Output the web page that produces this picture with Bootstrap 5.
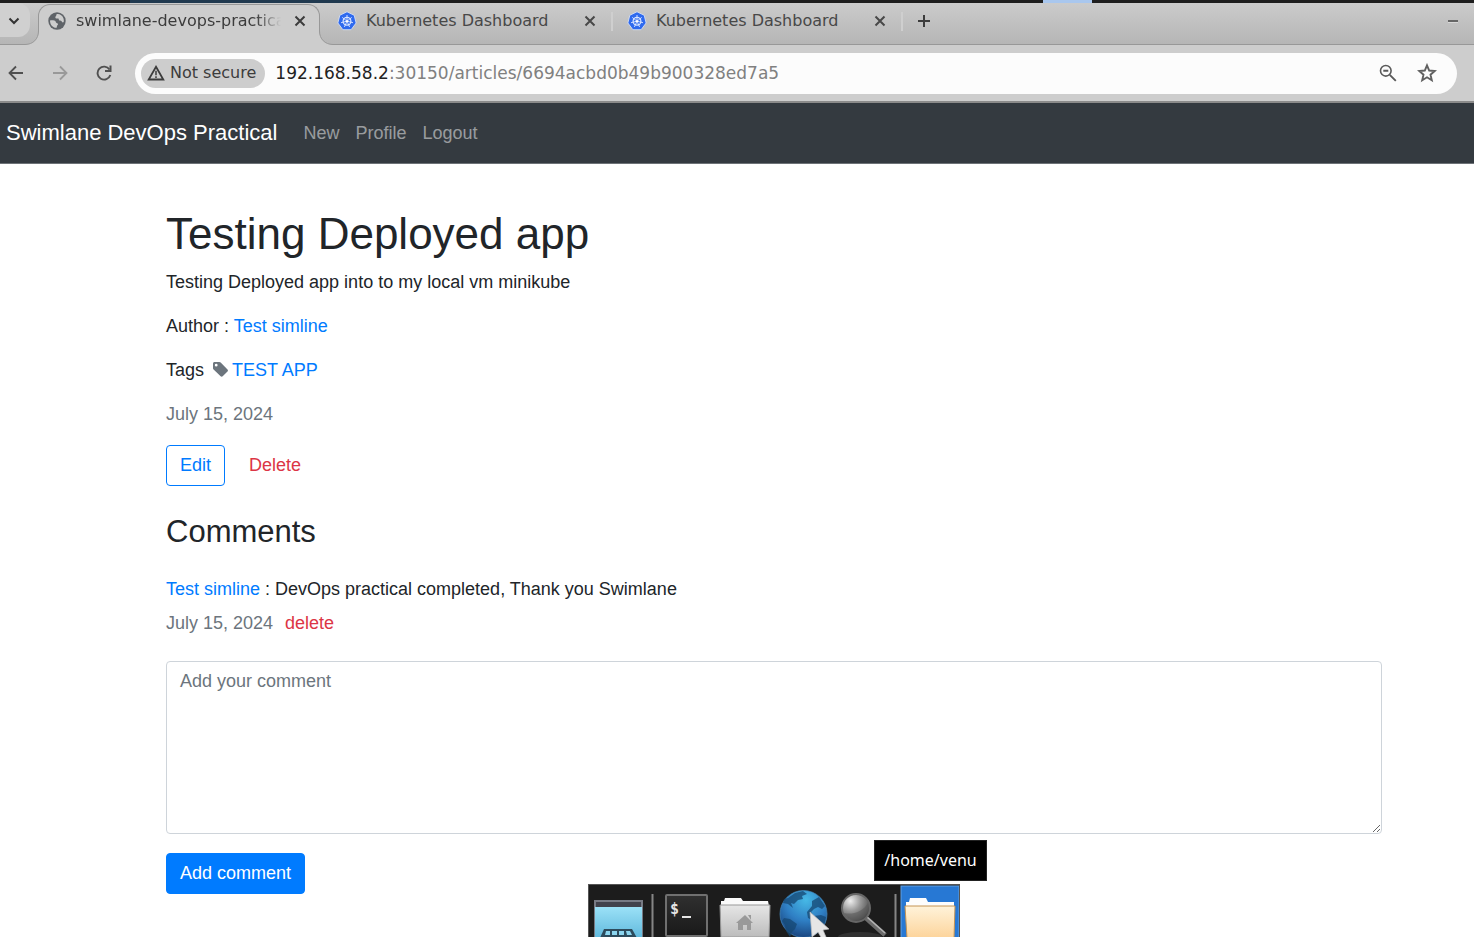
<!DOCTYPE html>
<html lang="en">
<head>
<meta charset="utf-8">
<meta name="viewport" content="width=device-width, initial-scale=1">
<title>swimlane-devops-practical</title>
<link href="https://cdn.jsdelivr.net/npm/bootstrap@5.3.0/dist/css/bootstrap.min.css" rel="stylesheet">
<style>
:root{--chrome:#cdcdcd;--edge:#989898;--ink:#3c3c3c}
body{font-family:"Liberation Sans",Arial,sans-serif;font-size:18px;line-height:26px;color:#212529;background:#fff;min-height:100vh;overflow:hidden}
svg{display:block;flex:none}
a{text-decoration:none;color:#007bff}
p{margin-bottom:18px}
/* browser frame */
.browser{font-family:"DejaVu Sans",sans-serif;font-size:16px;line-height:24px;color:var(--ink)}
.desk-edge{height:3px;background:linear-gradient(90deg,#1e1e1e 130px,#20394f 130px 370px,#1e1e1e 370px 1043px,#a9c7ee 1043px 1092px,#1e1e1e 1092px)}
.tab-strip{height:42px;background:linear-gradient(#cbcbcb,#b5b5b5);box-shadow:inset 0 -1px var(--edge)}
.bare{border:0;padding:0;background:none;color:inherit;display:flex;align-items:center;justify-content:center;flex:none}
.tab-search{width:30px;height:34px;background:#d0d0d0;border-radius:0 12px 12px 0;margin-right:8px}
.tab-item{width:290px;height:36px;padding-left:14px;gap:9px;position:relative;color:#484848}
.tab-item .bare{position:absolute;left:258px;width:18px;height:18px}
.tab-item.rule::after{content:"";position:absolute;right:0;width:2px;height:19px;background:#cfcfcf}
.tab-on{width:282px;height:41px;margin:1px 3px 0 0;padding:0 0 8px 9px;gap:10px;background:var(--chrome);border:1px solid var(--edge);border-bottom:0;border-radius:12px 12px 0 0;color:var(--ink)}
.tab-on .tab-label{width:205px;overflow:hidden;white-space:nowrap;-webkit-mask-image:linear-gradient(90deg,#000 180px,transparent 205px);mask-image:linear-gradient(90deg,#000 180px,transparent 205px)}
.tab-on .bare{left:252px}
.foot{position:absolute;bottom:0}
.foot-l{left:-14px}
.foot-r{right:-14px}
.new-tab{width:42px;height:36px}
.minimize{width:42px;height:36px}
.toolbar-row{height:58px;background:var(--chrome);border-bottom:2px solid #8b8b8b;padding-right:17px}
.tool{width:44px;height:32px}
.tool-back{width:38px;padding-right:6px}
.omni{height:41px;border-radius:21px;background:#fcfcfc;padding:0 20px 0 6px;margin-left:9px}
.chip{height:29px;border-radius:15px;background:var(--chrome);padding:0 9px 0 6px;gap:5px;margin-right:10px}
.star-btn{margin-left:7px}
.url{font-size:17px;color:#808080}
.url b{font-weight:400;color:#222}
/* application */
.app-bar{background:#343a40;height:61px;padding:0 6px;border-bottom:1px solid #6d7277}
.app-bar .navbar-brand{font-size:22px;color:#fff;margin-right:18px;padding:0}
.app-bar .nav-link{color:rgba(255,255,255,.5);padding:0 8px}
.article{padding:43px 92px 0 166px}
h1{font-size:44px;line-height:53px;font-weight:400;margin-bottom:9px}
h2{font-size:31px;line-height:37px;font-weight:400;margin:27px 0 26px}
.app-btn{font-size:18px;line-height:26px;padding:5px 13px 7px;height:41px;border-radius:4px;display:inline-flex;align-items:center}
.btn-outline-primary{--bs-btn-color:#007bff;--bs-btn-border-color:#007bff}
.btn-primary{--bs-btn-bg:#007bff;--bs-btn-border-color:#007bff}
.app-actions{gap:10px}
.comment-meta{gap:12px}
.comment-form{padding-top:25px}
.muted{color:#6c757d}
.red{color:#dc3545}
textarea.form-control{font-size:18px;line-height:26px;padding:6px 13px;height:173px;border:1px solid #ced4da;border-radius:4px;margin-bottom:19px}
textarea.form-control::placeholder{color:#6c757d}
/* desktop panel over the page */
.dock{position:absolute;bottom:0;left:588px;width:372px;height:53px;background:#1c1c1c;border:1px solid #555;border-bottom:0;overflow:hidden}
.dock svg{margin:-1px 0 0 -1px}
.dock-tip{position:absolute;bottom:56px;left:874px;width:113px;height:41px;background:#000;border:1px solid #222;color:#fff;font:16px/39px "Noto Sans",sans-serif;text-align:center}
</style>
</head>
<body class="position-relative">
<svg width="0" height="0" class="position-absolute" aria-hidden="true">
  <defs>
    <symbol id="x" viewBox="0 0 18 18"><path d="M4.500 4.500l9 9M13.500 4.500l-9 9" stroke="currentColor" stroke-width="2" fill="none"/></symbol>
    <symbol id="k8s" viewBox="0 0 20 20">
      <path d="M10 .8l7.200 3.500 1.900 7.700-5 6.700H5.900L.9 12l1.900-7.700z" fill="#2f6aee" stroke="#dfe7f6" stroke-width=".8" stroke-linejoin="round"/>
      <circle cx="10" cy="10.300" r="3.900" fill="none" stroke="#dce7ff" stroke-width="1.200"/>
      <path d="M10 4V9M14.800 6.400l-4.100 3.200M16 11.700l-5-1.200M12.600 16l-2.100-4.700M7.400 16l2.100-4.700M4 11.700l5-1.200M5.200 6.400l4.100 3.200" stroke="#dce7ff" stroke-width=".9"/>
      <circle cx="10" cy="10.300" r="1.200" fill="#fff"/>
    </symbol>
  </defs>
</svg>

<header class="browser">
  <div class="desk-edge"></div>
  <div class="tab-strip d-flex">
    <button class="bare tab-search" aria-label="Search tabs"><svg width="14" height="14" viewBox="0 0 14 14"><path d="M1.500 5.500L6 10l4.500-4.500" fill="none" stroke="#333" stroke-width="2"/></svg></button>
    <div class="tab-item tab-on d-flex align-items-center">
      <svg class="foot foot-l" width="14" height="14" viewBox="0 0 14 14"><path d="M0 13.500C8 13.500 13.500 8 13.500 0H14v14H0z" fill="#cdcdcd"/><path d="M0 13.500C8 13.500 13.500 8 13.500 0" fill="none" stroke="#989898"/></svg>
      <svg width="18" height="18" viewBox="0 0 18 18"><circle cx="9" cy="9" r="8.700" fill="#5f6368"/><path d="M8.500 2.200c2.800-.6 6 1 7 4.200.4 1.500.4 2.600.2 3.600-.6.700-1.400.5-1.800-.3-.5-1-1.700-.7-2.400-1.100-1-.6-.4-1.700-1.300-2-1.200-.4-2.700.2-2.900-1.200-.1-1.100 1.400-1.400 1.200-3.200zM2 8.500c1.700-.3 4.800-.3 5.500.8.600 1 .3 1.600 1.500 1.900 1.200.3 1.400 1 .6 1.800-.8.700-.6 1.700-1 2.800-3.700.2-6.600-3-6.600-7.300z" fill="#cdcdcd"/></svg>
      <span class="tab-label">swimlane-devops-practical</span>
      <button class="bare" aria-label="Close tab"><svg width="18" height="18"><use href="#x"/></svg></button>
      <svg class="foot foot-r" width="14" height="14" viewBox="0 0 14 14"><path d="M14 13.500C6 13.500.5 8 .5 0H0v14h14z" fill="#cdcdcd"/><path d="M14 13.500C6 13.500.5 8 .5 0" fill="none" stroke="#989898"/></svg>
    </div>
    <div class="tab-item rule d-flex align-items-center">
      <svg width="20" height="20"><use href="#k8s"/></svg><span>Kubernetes Dashboard</span>
      <button class="bare" aria-label="Close tab"><svg width="18" height="18"><use href="#x"/></svg></button>
    </div>
    <div class="tab-item rule d-flex align-items-center">
      <svg width="20" height="20"><use href="#k8s"/></svg><span>Kubernetes Dashboard</span>
      <button class="bare" aria-label="Close tab"><svg width="18" height="18"><use href="#x"/></svg></button>
    </div>
    <button class="bare new-tab" aria-label="New tab"><svg width="14" height="14" viewBox="0 0 14 14"><path d="M7 1v12M1 7h12" stroke="#3c3c3c" stroke-width="2"/></svg></button>
    <button class="bare minimize ms-auto" aria-label="Minimize"><svg width="10" height="4" viewBox="0 0 10 4"><path d="M0 2h10" stroke="#666" stroke-width="2"/><path d="M0 3.500h10" stroke="#d8d8d8"/></svg></button>
  </div>
  <div class="toolbar-row d-flex align-items-center">
    <div class="d-flex">
      <button class="bare tool tool-back" aria-label="Back"><svg width="16" height="16" viewBox="0 0 16 16"><path d="M15 8H2M8 1.500L1.500 8 8 14.500" fill="none" stroke="#505050" stroke-width="1.800"/></svg></button>
      <button class="bare tool" aria-label="Forward"><svg width="16" height="16" viewBox="0 0 16 16"><path d="M1 8h13M8 1.500L14.500 8 8 14.500" fill="none" stroke="#999" stroke-width="1.800"/></svg></button>
      <button class="bare tool" aria-label="Reload"><svg width="16" height="16" viewBox="0 0 16 16"><path d="M13.500 4.500A6.500 6.500 0 1 0 14.300 10" fill="none" stroke="#505050" stroke-width="1.900"/><path d="M15.500.5v6.500H9V5h4.500V.5z" fill="#505050"/></svg></button>
    </div>
    <div class="omni d-flex align-items-center flex-grow-1">
      <button class="bare chip"><svg width="18" height="16" viewBox="0 0 18 16"><path d="M9 1.800L16.300 14.500H1.700z" fill="none" stroke="#3c3c3c" stroke-width="1.800"/><path d="M9 5.800v4.400M9 11.300v1.700" stroke="#3c3c3c" stroke-width="1.500"/></svg>Not secure</button>
      <div class="url flex-grow-1"><b>192.168.58.2</b>:30150/articles/6694acbd0b49b900328ed7a5</div>
      <button class="bare tool" aria-label="Zoom"><svg width="18" height="18" viewBox="0 0 18 18"><circle cx="6.800" cy="6.800" r="5.300" fill="none" stroke="#5a5a5a" stroke-width="1.600"/><path d="M4.300 6.800h5M10.800 10.800l6 6" stroke="#5a5a5a" stroke-width="1.900"/></svg></button>
      <button class="bare star-btn" aria-label="Bookmark"><svg width="20" height="20" viewBox="0 0 20 20"><path d="M10 2.300l2.200 5.200 5.600.5-4.300 3.700 1.300 5.500L10 14.300l-4.800 2.900 1.300-5.500L2.200 8l5.600-.5z" fill="none" stroke="#606060" stroke-width="1.900"/></svg></button>
    </div>
  </div>
</header>

<nav class="app-bar navbar navbar-expand">
  <a class="navbar-brand" href="#">Swimlane DevOps Practical</a>
  <div class="navbar-nav">
    <a class="nav-link" href="#">New</a>
    <a class="nav-link" href="#">Profile</a>
    <a class="nav-link" href="#">Logout</a>
  </div>
</nav>

<main class="article">
  <h1>Testing Deployed app</h1>
  <p>Testing Deployed app into to my local vm minikube</p>
  <p>Author : <a href="#">Test simline</a></p>
  <p class="d-flex align-items-center">Tags<svg class="ms-2 me-1" width="16" height="16" viewBox="0 0 16 16"><path fill="#6c757d" fill-rule="evenodd" d="M1 1.500C1 .7 1.700 0 2.500 0h4.800c.5 0 1 .2 1.400.6l6.800 6.800c.6.600.6 1.500 0 2.100l-4.800 4.800c-.6.600-1.500.6-2.100 0L1.600 7.500C1.200 7.100 1 6.700 1 6.200zM4.200 1.800a1.400 1.400 0 1 0 0 2.800 1.400 1.400 0 0 0 0-2.800z"/></svg><a href="#">TEST APP</a></p>
  <p class="muted">July 15, 2024</p>
  <div class="d-flex app-actions">
    <button class="btn btn-outline-primary app-btn">Edit</button>
    <button class="btn app-btn red">Delete</button>
  </div>
  <h2>Comments</h2>
  <p class="mb-2"><a href="#">Test simline</a> : DevOps practical completed, Thank you Swimlane</p>
  <p class="muted d-flex comment-meta mb-0">July 15, 2024 <a class="red" href="#">delete</a></p>
  <form class="comment-form">
    <textarea class="form-control" aria-label="Comment" placeholder="Add your comment"></textarea>
    <button type="button" class="btn btn-primary app-btn">Add comment</button>
  </form>
</main>

<div class="dock-tip" role="tooltip">/home/venu</div>
<div class="dock">
<svg width="372" height="53" viewBox="0 0 372 53" aria-label="Desktop panel">
  <defs>
    <linearGradient id="sky" x2="0" y2="1"><stop stop-color="#9be1f7"/><stop offset="1" stop-color="#5fb8dc"/></linearGradient>
    <linearGradient id="grey" x2="0" y2="1"><stop stop-color="#e6e6e6"/><stop offset="1" stop-color="#bcbcbc"/></linearGradient>
    <linearGradient id="cream" x2="0" y2="1"><stop stop-color="#fff3da"/><stop offset="1" stop-color="#fdd49b"/></linearGradient>
    <radialGradient id="sea" cx=".55" cy=".2" r=".8"><stop stop-color="#46b9e6"/><stop offset=".55" stop-color="#2f7fc4"/><stop offset="1" stop-color="#1a4680"/></radialGradient>
    <radialGradient id="lens" cx=".3" cy=".25" r=".8"><stop stop-color="#eee"/><stop offset=".45" stop-color="#999"/><stop offset="1" stop-color="#444"/></radialGradient>
    <linearGradient id="tty" x2="0" y2="1"><stop stop-color="#303030"/><stop offset="1" stop-color="#191919"/></linearGradient>
  </defs>
  <rect x="6" y="16" width="49" height="40" fill="#777a84"/><rect x="8" y="18" width="45" height="5" fill="#41424c"/><rect x="7" y="23" width="47" height="32" fill="url(#sky)"/>
  <path d="M12 54l4-9h28l5 9z" fill="#2d4b5c"/><path d="M18 47h4v4h-5zM24 47h5v4h-5zM31 47h5v4h-5zM38 47h4l2 4h-5zM16 53h6v2h-6zM24 53h5v2h-5zM31 53h6v2h-6zM39 53h6v2h-6z" fill="#8bd5ef"/>
  <path d="M64.500 10v43M307.500 10v43" stroke="#858585" stroke-width="2"/>
  <rect x="78" y="11" width="41" height="41" rx="1" fill="url(#tty)" stroke="#707070" stroke-width="2"/>
  <text x="82" y="30" font-family="DejaVu Sans Mono, monospace" font-size="15" font-weight="bold" fill="#e4e4e4">$</text><path d="M94 33h9" stroke="#e4e4e4" stroke-width="2"/>
  <path d="M133 21v-4h3l1-3h16l2 3h25l1 5z" fill="#fafafa"/><path d="M132 21h50l-1 32h-48z" fill="url(#grey)" stroke="#999" stroke-width="1"/>
  <path d="M157 31l8 8h-2v7h-4v-5h-4v5h-5v-7h-2z M160 31h3v5z" fill="#999"/>
  <circle cx="215.500" cy="30" r="23.500" fill="url(#sea)" stroke="#4488bd" stroke-width=".7"/>
  <path d="M200 14l7-5 8-2 4 3-5 2 1 3-5 1-4 4-3-1 2 5-5-4-5-1 1-4zM224 17l7-4 6 9-3 3-4-2-4 2-3 3 3 4 7-1 5 2-2 9-4 5-5-3-1-7-6-3-1-6 5-6zM196 34l6 1 7 5-2 5-3 3-2 5-4-6-1-6-3-4z" fill="#154771" opacity=".75"/>
  <path d="M222 28l2 25 6-5 4 7 4-2-3-7 6-1z" fill="#e6e6e6" stroke="#bbb" stroke-width=".7"/>
  <ellipse cx="272" cy="53" rx="22" ry="5" fill="#303030"/>
  <path d="M278 34l19 17" stroke="#6c6c6c" stroke-width="5"/><path d="M279 33l18 16" stroke="#b5b5b5" stroke-width="1.500"/>
  <circle cx="268" cy="24" r="14" fill="url(#lens)" stroke="#666" stroke-width="2"/><path d="M256 29c8 2 19-1 24-10 2 10-4 17-12 17-6 0-10-3-12-7z" fill="#555" opacity=".5"/>
  <rect x="313" y="2" width="58" height="52" fill="#2778d4" stroke="#61a0e3"/>
  <path d="M318 22v-4h3l1-4h16l2 4h26v5z" fill="#fdfdfd"/><path d="M317 22h50l-1 32h-47z" fill="url(#cream)" stroke="#c49455"/>
</svg>
</div>
<script src="https://cdn.jsdelivr.net/npm/bootstrap@5.3.0/dist/js/bootstrap.bundle.min.js"></script>
</body>
</html>
